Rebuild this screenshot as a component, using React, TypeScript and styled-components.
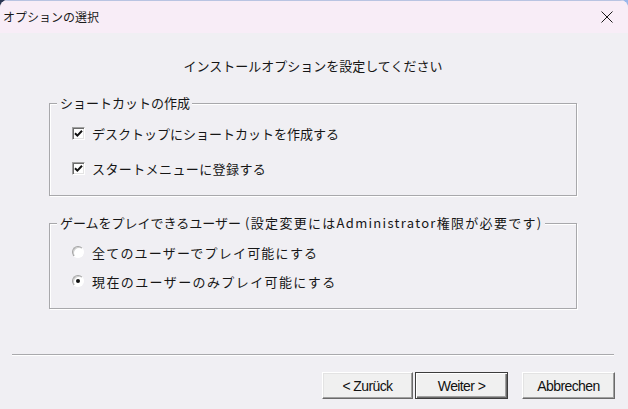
import React from 'react'
import styled, { createGlobalStyle } from 'styled-components'

const GlobalStyle = createGlobalStyle`
  html, body {
    margin: 0;
    height: 100%;
    background: linear-gradient(90deg, #2b3754 0%, #6f8fcf 60%, #9bb8ec 100%);
  }
  body {
    font-family: "Noto Sans CJK JP", "Noto Sans", sans-serif;
    color: #161616;
  }
  #root {
    height: 100%;
  }
`

const Window = styled.div`
  display: flex;
  flex-direction: column;
  height: 100%;
  border-radius: 8px 8px 0 0;
  overflow: hidden;
  background: #f0eff3;
`

const TitleBar = styled.div`
  display: flex;
  align-items: center;
  justify-content: space-between;
  height: 33px;
  padding: 0 9px 0 3px;
  background: #f8edf7;
  border-top: 1px solid #b9c4e2;
  box-sizing: border-box;
`

const Title = styled.span`
  font-size: 12px;
  line-height: 16px;
  color: #1b1b1b;
`

const CloseButton = styled.span`
  display: flex;
  align-items: center;
  justify-content: center;
  width: 24px;
  height: 24px;
`

const Body = styled.div`
  display: flex;
  flex-direction: column;
  padding: 0 14px 0 12px;
`

const Heading = styled.div`
  margin-top: 25px;
  font-size: 13px;
  line-height: 16px;
  text-align: center;
`

const GroupBox = styled.div<{ $gap: number; $top: number; $pad: string }>`
  position: relative;
  display: flex;
  flex-direction: column;
  gap: ${p => p.$gap}px;
  margin: ${p => p.$top}px 37px 0;
  padding: ${p => p.$pad};
  border: 1px solid #a8a8ab;
  box-shadow: 1px 1px 0 #ffffff, inset 1px 1px 0 #ffffff;
`

const Legend = styled.span`
  position: absolute;
  top: -9px;
  left: 7px;
  padding: 0 2px 0 3px;
  background: #f0eff3;
  font-size: 13px;
  line-height: 16px;
  white-space: nowrap;
`

const Note = styled.span`
  margin-left: 4px;
  letter-spacing: 1.3px;
`

const Row = styled.div<{ $track?: number }>`
  display: flex;
  align-items: center;
  gap: 7px;
  height: 20px;
  font-size: 13px;
  letter-spacing: ${p => p.$track ?? 0}px;
`

const CheckBox = styled.span`
  display: flex;
  align-items: center;
  justify-content: center;
  width: 13px;
  height: 13px;
  box-sizing: border-box;
  background: #ffffff;
  border: 1px solid;
  border-color: #a0a0a0 #ffffff #ffffff #a0a0a0;
  box-shadow: inset 1px 1px 0 #6b6b6b, inset -1px -1px 0 #e3e3e3;
`

const Radio = styled.span<{ $on?: boolean }>`
  position: relative;
  width: 12px;
  height: 12px;
  margin-right: 1px;
  box-sizing: border-box;
  border-radius: 50%;
  background: #ffffff;
  border: 1px solid;
  border-color: #a3a3a3 #ffffff #ffffff #a3a3a3;
  box-shadow: inset 1px 1px 0 #cfcfcf;

  &::after {
    content: '';
    display: ${p => (p.$on ? 'block' : 'none')};
    position: absolute;
    left: 3px;
    top: 3px;
    width: 4px;
    height: 4px;
    border-radius: 50%;
    background: #111111;
  }
`

const Separator = styled.div`
  margin-top: 45px;
  height: 0;
  border-top: 1px solid #a9a9ac;
  border-bottom: 1px solid #ffffff;
`

const ButtonRow = styled.div`
  display: flex;
  justify-content: flex-end;
  margin: 16px -1px 0 0;
`

const Button = styled.button<{ $default?: boolean; $w: number; $after: number }>`
  width: ${p => p.$w}px;
  height: 27px;
  margin-right: ${p => p.$after}px;
  padding: 0;
  font-family: "Liberation Sans", Arial, sans-serif;
  font-size: 14px;
  letter-spacing: -0.6px;
  color: #111111;
  background: #f0f0f0;
  border: 1px solid;
  border-color: ${p => (p.$default ? '#3c3c3c' : '#ffffff #6a6a6a #6a6a6a #ffffff')};
  box-shadow: ${p =>
    p.$default
      ? 'inset 1px 1px 0 #ffffff, inset -1px -1px 0 #6a6a6a, inset -2px -2px 0 #a0a0a0'
      : 'inset -1px -1px 0 #a0a0a0, inset 1px 1px 0 #e3e3e3'};
`

const Check = () => (
  <svg width="9" height="9" viewBox="0 0 9 9">
    <path d="M1 4.2 L3.4 6.6 L8 1.8" fill="none" stroke="#111" strokeWidth="2" />
  </svg>
)

const CloseIcon = () => (
  <svg width="12" height="12" viewBox="0 0 12 12">
    <path d="M0.5 0.5 L11.5 11.5 M11.5 0.5 L0.5 11.5" stroke="#1b1b1b" strokeWidth="1" />
  </svg>
)

export default function App() {
  return (
    <>
      <GlobalStyle />
      <Window>
        <TitleBar>
          <Title>オプションの選択</Title>
          <CloseButton><CloseIcon /></CloseButton>
        </TitleBar>
        <Body>
          <Heading>インストールオプションを設定してください</Heading>

          <GroupBox $top={29} $gap={15} $pad="19px 22px 17px">
            <Legend>ショートカットの作成</Legend>
            <Row><CheckBox><Check /></CheckBox>デスクトップにショートカットを作成する</Row>
            <Row $track={0.4}><CheckBox><Check /></CheckBox>スタートメニューに登録する</Row>
          </GroupBox>

          <GroupBox $top={27} $gap={9} $pad="18px 22px 17px">
            <Legend>
              ゲームをプレイできるユーザー<Note>(設定変更にはAdministrator権限が必要です)</Note>
            </Legend>
            <Row $track={1.2}><Radio />全てのユーザーでプレイ可能にする</Row>
            <Row $track={1.4}><Radio $on />現在のユーザーのみプレイ可能にする</Row>
          </GroupBox>

          <Separator />

          <ButtonRow>
            <Button $w={91} $after={2}>&lt; Zurück</Button>
            <Button $w={93} $after={14} $default>Weiter &gt;</Button>
            <Button $w={93} $after={0}>Abbrechen</Button>
          </ButtonRow>
        </Body>
      </Window>
    </>
  )
}
